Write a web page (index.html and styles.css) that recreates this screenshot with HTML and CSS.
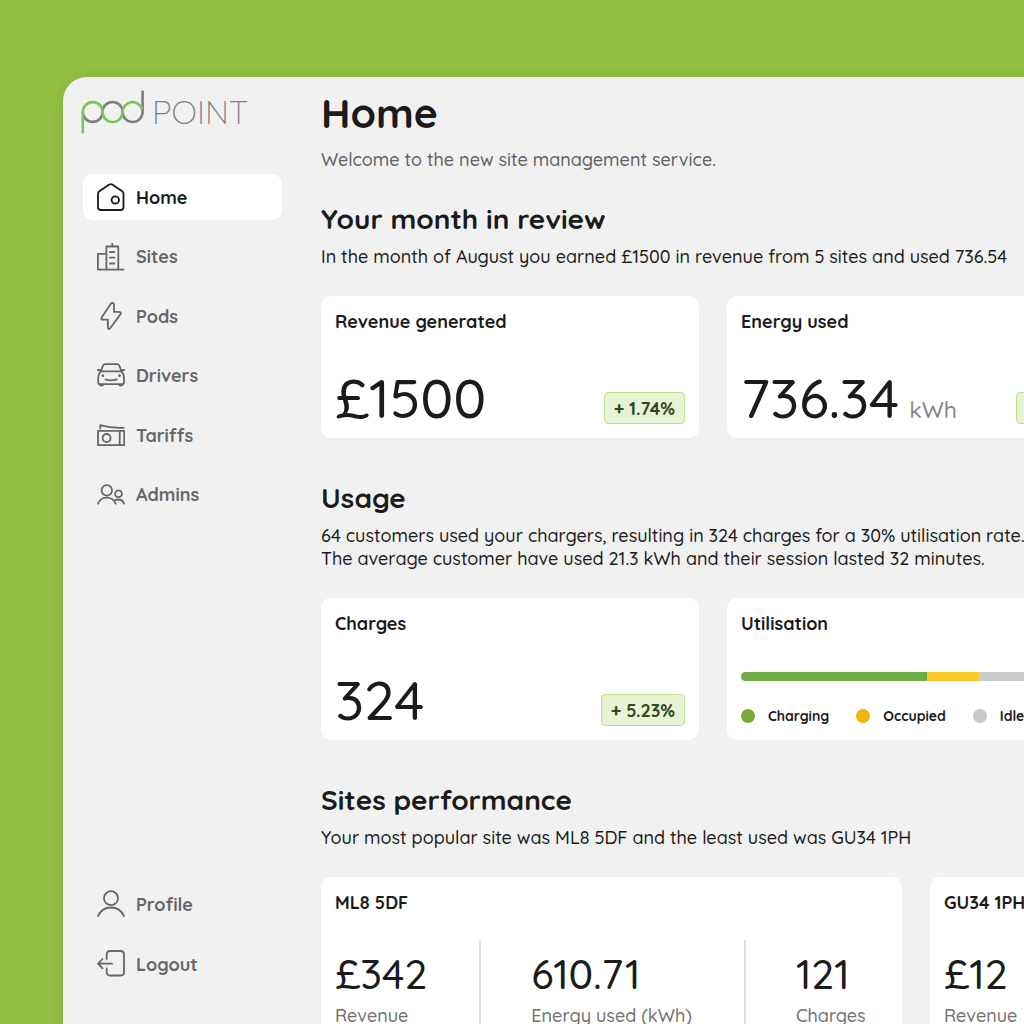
FILE: index.html
```html
<!DOCTYPE html>
<html lang="en">
<head>
<meta charset="utf-8">
<meta name="viewport" content="width=device-width, initial-scale=1">
<title>Home - Pod Point</title>
<link rel="stylesheet" href="styles.css">
</head>
<body>
<div class="app">
  <aside class="sidebar">
    <a class="logo" href="#" aria-label="Pod Point">
      <svg class="logo-mark" width="64" height="46" viewBox="0 0 64 46" fill="none" stroke-width="2.6">
        <g stroke="#7b8084">
          <path d="M1.800 22a9.900 9.900 0 0 0 19.800 0"/>
          <path d="M21.600 22a10 10 0 0 1 20 0"/>
          <path d="M41.600 22a10 10 0 0 0 20 0V.5"/>
        </g>
        <g stroke="#7fc550">
          <path d="M1.800 43.500V22a9.900 9.900 0 0 1 19.800 0a10 10 0 0 0 20 0a10 10 0 0 1 19.500-3"/>
        </g>
      </svg>
      <span class="logo-word">POINT</span>
    </a>
    <nav class="nav nav-main" aria-label="Main">
      <a class="nav-item active" href="#" aria-current="page">
        <svg class="icon" viewBox="0 0 28 28"><path d="M12.300 1.500 2.300 8.300Q1 9.200 1 10.800V24Q1 27 4 27H23.500Q26.500 27 26.500 24V10.800Q26.500 9.200 25.200 8.300L15.200 1.500Q13.750.6 12.300 1.500Z"/><circle cx="18.300" cy="17" r="3.700"/></svg>
        Home
      </a>
      <a class="nav-item" href="#">
        <svg class="icon" viewBox="0 0 28 28"><path d="M.9 26.600H26.500M.9 26.600V10.900H9.400M9.400 26.600V3.500H21.300V26.600M15.300 3.500V.8M12.900 9H17.300M12.900 14.700H17.300M12.900 20.500H17.300"/></svg>
        Sites
      </a>
      <a class="nav-item" href="#">
        <svg class="icon" viewBox="0 0 28 28"><path d="M14 1.500 4.600 15.500Q3.700 17.400 5.700 17.700H10.900V25.500Q11.200 27.900 13 26.500L23.400 12.200Q24.600 10.200 22.400 9.900H17V2.200Q16.200-.2 14 1.500Z"/></svg>
        Pods
      </a>
      <a class="nav-item" href="#">
        <svg class="icon" viewBox="0 0 28 28"><path d="M3.500 10.200 5.900 3.800Q6.600 2.200 8.200 2.200H20Q21.700 2.200 22.400 3.800L24.700 10.200M.8 8H3M25 8H27.200M3.200 9.400H25Q27 12.500 27 16.500V20.800Q27 22.100 25.700 22.100H2.500Q1.200 22.100 1.200 20.800V16.500Q1.200 12.500 3.200 9.400ZM8.500 17.400Q14 19.400 19.800 17.400"/><g class="solid"><circle cx="5.800" cy="13.700" r="1.400"/><circle cx="22.500" cy="13.700" r="1.400"/><path d="M1.800 22H6.900V23.200Q4.300 26 1.800 23.200ZM21.400 22H26.500V23.200Q23.900 26 21.400 23.200Z"/></g></svg>
        Drivers
      </a>
      <a class="nav-item" href="#">
        <svg class="icon" viewBox="0 0 28 28"><path d="M1 9.800H27.200V24.200H1ZM22.700 9.800V24.200M3.300 7.500V4.200Q14 7.400 26.700 6.800"/><circle cx="9.600" cy="17" r="4"/></svg>
        Tariffs
      </a>
      <a class="nav-item" href="#">
        <svg class="icon" viewBox="0 0 28 28"><circle cx="9.800" cy="9.400" r="5.200"/><circle cx="21.500" cy="12.700" r="3.400"/><path d="M1 22.700Q3.500 16.700 9.800 16.700T18.600 22.700M18 19.300Q19.500 18.500 21.500 18.500 25.800 18.500 27 22.700"/></svg>
        Admins
      </a>
    </nav>
    <nav class="nav nav-account" aria-label="Account">
      <a class="nav-item" href="#">
        <svg class="icon" viewBox="0 0 28 28"><circle cx="14" cy="8.200" r="7"/><path d="M1 26Q5 17.500 14 17.500T27 26"/></svg>
        Profile
      </a>
      <a class="nav-item" href="#">
        <svg class="icon" viewBox="0 0 28 28"><path d="M9.700 9V4.500Q9.700 1 13.200 1H23.500Q27 1 27 4.500V22Q27 25.500 23.500 25.500H13.200Q9.700 25.500 9.700 22V18.500M15 13.700H1M5.500 9 1 13.700 5.500 18.400"/></svg>
        Logout
      </a>
    </nav>
  </aside>

  <main class="main">
    <header class="page-head">
      <h1>Home</h1>
      <p class="welcome">Welcome to the new site management service.</p>
    </header>

    <section class="section">
      <h2>Your month in review</h2>
      <p class="summary">In the month of August you earned £1500 in revenue from 5 sites and used 736.54</p>
      <div class="grid thirds">
        <article class="card">
          <h3>Revenue generated</h3>
          <div class="stat"><span class="value">£1500</span><span class="badge">+ 1.74%</span></div>
        </article>
        <article class="card">
          <h3>Energy used</h3>
          <div class="stat"><span class="value">736.34<small class="unit">kWh</small></span><span class="badge">+ 3.2%</span></div>
        </article>
      </div>
    </section>

    <section class="section">
      <h2>Usage</h2>
      <p class="summary">64 customers used your chargers, resulting in 324 charges for a 30% utilisation rate.<br>The average customer have used 21.3 kWh and their session lasted 32 minutes.</p>
      <div class="grid thirds">
        <article class="card">
          <h3>Charges</h3>
          <div class="stat"><span class="value">324</span><span class="badge">+ 5.23%</span></div>
        </article>
        <article class="card">
          <h3>Utilisation</h3>
          <div class="bar">
            <span class="charging" style="width:53%"></span>
            <span class="occupied" style="width:15%"></span>
          </div>
          <ul class="legend">
            <li><i class="dot dot-charging"></i>Charging</li>
            <li><i class="dot dot-occupied"></i>Occupied</li>
            <li><i class="dot dot-idle"></i>Idle</li>
          </ul>
        </article>
      </div>
    </section>

    <section class="section">
      <h2>Sites performance</h2>
      <p class="summary">Your most popular site was ML8 5DF and the least used was GU34 1PH</p>
      <div class="grid halves">
        <article class="card">
          <h3>ML8 5DF</h3>
          <dl class="metrics">
            <div class="metric"><dt>Revenue</dt><dd>£342</dd></div>
            <div class="metric"><dt>Energy used (kWh)</dt><dd>610.71</dd></div>
            <div class="metric"><dt>Charges</dt><dd>121</dd></div>
          </dl>
        </article>
        <article class="card">
          <h3>GU34 1PH</h3>
          <dl class="metrics">
            <div class="metric"><dt>Revenue</dt><dd>£12</dd></div>
          </dl>
        </article>
      </div>
    </section>
  </main>
</div>
</body>
</html>
```
FILE: styles.css
```css
* {
  box-sizing: border-box;
}

body {
  height: 100vh;
  margin: 0;
  padding: 77px 0 0 63px;
  overflow: hidden;
  background: #91c044;
  color: #1b1b1b;
  font-family: Quicksand, Lato, sans-serif;
  font-size: 18px;
  font-weight: 500;
  line-height: 23px;
}

h1, h2, h3, p, dl, dd, ul {
  margin: 0;
  padding: 0;
}

/* The panel runs on past the right edge of the window. */
.app {
  display: flex;
  width: calc(150vw - 63px);
  background: #f1f1f1;
  border-radius: 24px 0 0 0;
  box-shadow: 0 0 16px rgba(60, 90, 20, 0.15);
}

.sidebar {
  display: flex;
  flex-direction: column;
  flex: none;
  width: 258px;
  height: calc(100vh - 77px);
  padding: 13px 39px 37px 18px;
}

.logo {
  display: flex;
  gap: 7px;
  height: 46px;
  margin-bottom: 38px;
  color: #7b8084;
  text-decoration: none;
}

.logo-mark {
  flex: none;
}

.logo-word {
  font-size: 33px;
  font-weight: 300;
  line-height: 44px;
}

.nav {
  display: flex;
  flex-direction: column;
  justify-content: space-between;
  margin-left: 2px;
}

.nav-main {
  height: 344px;
}

.nav-account {
  height: 106px;
  margin-top: auto;
}

.nav-item {
  display: flex;
  align-items: center;
  gap: 11px;
  height: 46px;
  padding: 0 14px;
  border-radius: 10px;
  color: #66676a;
  font-weight: 700;
  text-decoration: none;
}

.nav-item.active {
  background: #fff;
  color: #1b1b1b;
}

.icon {
  width: 28px;
  height: 28px;
  fill: none;
  stroke: currentColor;
  stroke-width: 1.8;
  stroke-linecap: round;
  stroke-linejoin: round;
}

.solid {
  fill: currentColor;
  stroke: none;
}

.main {
  flex: 1;
  min-width: 0;
  padding: 11px 25px 40px 0;
}

h1 {
  margin-bottom: 10px;
  font-size: 41px;
  line-height: 50px;
}

.welcome {
  margin-bottom: 30px;
  color: #5f6062;
}

.section {
  margin-bottom: 42px;
}

h2 {
  margin-bottom: 8px;
  font-size: 28px;
  font-weight: 700;
  line-height: 36px;
}

.summary {
  margin-bottom: 28px;
}

h3 {
  font-size: 18px;
  font-weight: 700;
  line-height: 24px;
}

.grid {
  display: grid;
  gap: 28px;
}

.thirds {
  grid-template-columns: repeat(3, 1fr);
}

.halves {
  grid-template-columns: repeat(2, 1fr);
}

.card {
  display: flex;
  flex-direction: column;
  min-height: 142px;
  padding: 14px;
  background: #fff;
  border-radius: 10px;
}

.stat {
  display: flex;
  align-items: flex-end;
  justify-content: space-between;
  margin-top: auto;
}

.value {
  font-size: 55px;
  line-height: 52px;
}

.unit {
  margin-left: 10px;
  color: #86878a;
  font-size: 23px;
  line-height: 23px;
}

.badge {
  height: 32px;
  padding: 0 9px;
  border: 1px solid #bfe08c;
  border-radius: 4px;
  background: #e8f2d4;
  color: #32491f;
  font-size: 18px;
  font-weight: 700;
  line-height: 31px;
}

.bar {
  display: flex;
  height: 9px;
  margin-top: 36px;
  overflow: hidden;
  border-radius: 5px;
  background: #cbcbcb;
}

.charging {
  background: #6eac48;
}

.occupied {
  background: #f9ca28;
}

.legend {
  display: flex;
  gap: 27px;
  margin-top: 25px;
  list-style: none;
  font-size: 14px;
  font-weight: 700;
  line-height: 20px;
}

.legend li {
  display: flex;
  align-items: center;
  gap: 13px;
}

.dot {
  width: 14px;
  height: 14px;
  border-radius: 50%;
}

.dot-charging {
  background: #7bab37;
}

.dot-occupied {
  background: #f0b40a;
}

.dot-idle {
  background: #c6c7c9;
}

.metrics {
  display: flex;
  margin-top: 25px;
  white-space: nowrap;
}

.metric {
  display: flex;
  flex-direction: column-reverse;
  padding: 10px 52px 10px 0;
}

.metric:last-child {
  padding-right: 0;
}

.metric + .metric {
  padding-left: 50px;
  border-left: 2px solid #dcdcdc;
}

.metric dt {
  color: #6f7073;
  font-size: 18px;
}

.metric dd {
  margin-bottom: 6px;
  font-size: 41px;
  line-height: 48px;
}
```
